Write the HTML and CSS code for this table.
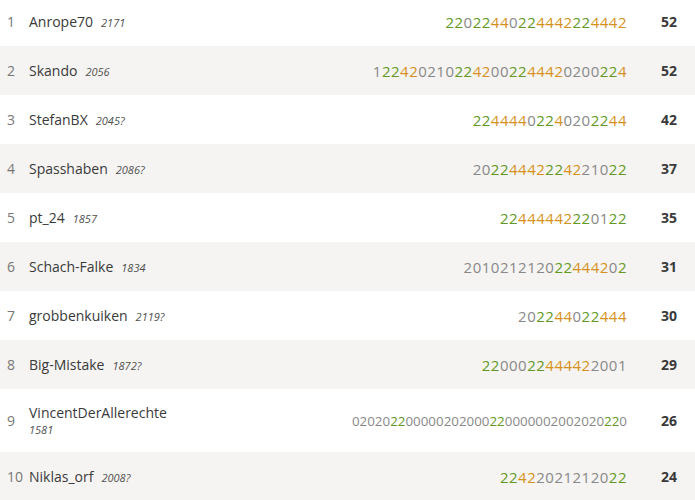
FILE: index.html
```html
<!DOCTYPE html>
<html lang="en">
<head>
<meta charset="utf-8">
<title>Standing</title>
<link rel="stylesheet" href="styles.css">
</head>
<body>
<div class="standing">
  <div class="row">
    <span class="rank">1</span>
    <span class="player"><span class="name">Anrope70</span><span class="rating">2171</span></span>
    <span class="sheet"><s class="g">2</s><s class="g">2</s><s>0</s><s class="g">2</s><s class="g">2</s><s class="o">4</s><s class="o">4</s><s>0</s><s class="g">2</s><s class="g">2</s><s class="o">4</s><s class="o">4</s><s class="o">4</s><s class="o">2</s><s class="g">2</s><s class="g">2</s><s class="o">4</s><s class="o">4</s><s class="o">4</s><s class="o">2</s></span>
    <span class="total">52</span>
  </div>
  <div class="row">
    <span class="rank">2</span>
    <span class="player"><span class="name">Skando</span><span class="rating">2056</span></span>
    <span class="sheet"><s>1</s><s class="g">2</s><s class="g">2</s><s class="o">4</s><s class="o">2</s><s>0</s><s>2</s><s>1</s><s>0</s><s class="g">2</s><s class="g">2</s><s class="o">4</s><s class="o">2</s><s>0</s><s>0</s><s class="g">2</s><s class="g">2</s><s class="o">4</s><s class="o">4</s><s class="o">4</s><s class="o">2</s><s>0</s><s>2</s><s>0</s><s>0</s><s class="g">2</s><s class="g">2</s><s class="o">4</s></span>
    <span class="total">52</span>
  </div>
  <div class="row">
    <span class="rank">3</span>
    <span class="player"><span class="name">StefanBX</span><span class="rating">2045?</span></span>
    <span class="sheet"><s class="g">2</s><s class="g">2</s><s class="o">4</s><s class="o">4</s><s class="o">4</s><s class="o">4</s><s>0</s><s class="g">2</s><s class="g">2</s><s class="o">4</s><s>0</s><s>2</s><s>0</s><s class="g">2</s><s class="g">2</s><s class="o">4</s><s class="o">4</s></span>
    <span class="total">42</span>
  </div>
  <div class="row">
    <span class="rank">4</span>
    <span class="player"><span class="name">Spasshaben</span><span class="rating">2086?</span></span>
    <span class="sheet"><s>2</s><s>0</s><s class="g">2</s><s class="g">2</s><s class="o">4</s><s class="o">4</s><s class="o">4</s><s class="o">2</s><s class="g">2</s><s class="g">2</s><s class="o">4</s><s class="o">2</s><s>2</s><s>1</s><s>0</s><s class="g">2</s><s class="g">2</s></span>
    <span class="total">37</span>
  </div>
  <div class="row">
    <span class="rank">5</span>
    <span class="player"><span class="name">pt_24</span><span class="rating">1857</span></span>
    <span class="sheet"><s class="g">2</s><s class="g">2</s><s class="o">4</s><s class="o">4</s><s class="o">4</s><s class="o">4</s><s class="o">4</s><s class="o">2</s><s class="g">2</s><s class="g">2</s><s>0</s><s>1</s><s class="g">2</s><s class="g">2</s></span>
    <span class="total">35</span>
  </div>
  <div class="row">
    <span class="rank">6</span>
    <span class="player"><span class="name">Schach-Falke</span><span class="rating">1834</span></span>
    <span class="sheet"><s>2</s><s>0</s><s>1</s><s>0</s><s>2</s><s>1</s><s>2</s><s>1</s><s>2</s><s>0</s><s class="g">2</s><s class="g">2</s><s class="o">4</s><s class="o">4</s><s class="o">4</s><s class="o">2</s><s>0</s><s class="g">2</s></span>
    <span class="total">31</span>
  </div>
  <div class="row">
    <span class="rank">7</span>
    <span class="player"><span class="name">grobbenkuiken</span><span class="rating">2119?</span></span>
    <span class="sheet"><s>2</s><s>0</s><s class="g">2</s><s class="g">2</s><s class="o">4</s><s class="o">4</s><s>0</s><s class="g">2</s><s class="g">2</s><s class="o">4</s><s class="o">4</s><s class="o">4</s></span>
    <span class="total">30</span>
  </div>
  <div class="row">
    <span class="rank">8</span>
    <span class="player"><span class="name">Big-Mistake</span><span class="rating">1872?</span></span>
    <span class="sheet"><s class="g">2</s><s class="g">2</s><s>0</s><s>0</s><s>0</s><s class="g">2</s><s class="g">2</s><s class="o">4</s><s class="o">4</s><s class="o">4</s><s class="o">4</s><s class="o">2</s><s>2</s><s>0</s><s>0</s><s>1</s></span>
    <span class="total">29</span>
  </div>
  <div class="row row-tall">
    <span class="rank">9</span>
    <span class="player player-stacked"><span class="name">VincentDerAllerechte</span><span class="rating">1581</span></span>
    <span class="sheet sheet-long"><s>0</s><s>2</s><s>0</s><s>2</s><s>0</s><s class="g">2</s><s class="g">2</s><s>0</s><s>0</s><s>0</s><s>0</s><s>0</s><s>2</s><s>0</s><s>2</s><s>0</s><s>0</s><s>0</s><s class="g">2</s><s class="g">2</s><s>0</s><s>0</s><s>0</s><s>0</s><s>0</s><s>0</s><s>2</s><s>0</s><s>0</s><s>2</s><s>0</s><s>2</s><s>0</s><s class="g">2</s><s class="g">2</s><s>0</s></span>
    <span class="total">26</span>
  </div>
  <div class="row">
    <span class="rank">10</span>
    <span class="player"><span class="name">Niklas_orf</span><span class="rating">2008?</span></span>
    <span class="sheet"><s class="g">2</s><s class="g">2</s><s class="o">4</s><s class="o">2</s><s>2</s><s>0</s><s>2</s><s>1</s><s>2</s><s>1</s><s>2</s><s>0</s><s class="g">2</s><s class="g">2</s></span>
    <span class="total">24</span>
  </div>
</div>
</body>
</html>
```

FILE: styles.css
```css
* { box-sizing: border-box; }

html, body {
  margin: 0;
  padding: 0;
  background: #fff;
}

body {
  font-family: "Open Sans", "Noto Sans", sans-serif;
  color: #3a3a3a;
  overflow: hidden;
}

.standing {
  margin-top: -3px;
}

.row {
  display: flex;
  align-items: center;
  height: 49px;
}

.row:nth-child(even) {
  background: #f5f4f2;
}

.row-tall {
  height: 63px;
}

.rank {
  flex: 0 0 29px;
  padding-left: 7px;
  font-size: 14px;
  color: #777;
}

.player {
  flex: 1 1 auto;
  min-width: 0;
  display: flex;
  align-items: baseline;
  white-space: nowrap;
}

.player-stacked {
  flex-direction: column;
  align-items: flex-start;
}

.name {
  font-size: 14px;
  line-height: 18px;
  color: #3a3a3a;
}

.rating {
  margin-left: 8px;
  font-size: 11px;
  font-style: italic;
  color: #505050;
}

.player-stacked .rating {
  margin-left: 0;
  line-height: 16px;
}

.sheet {
  flex: 0 0 auto;
  font-size: 15px;
  letter-spacing: 0.5px;
  white-space: nowrap;
  color: #888;
}

.sheet-long {
  font-size: 13.35px;
  letter-spacing: 0;
}

.sheet s {
  text-decoration: none;
}

.sheet .g { color: #629924; }
.sheet .o { color: #d59120; }

.total {
  flex: 0 0 68px;
  padding-right: 18px;
  text-align: right;
  font-size: 14px;
  font-weight: 700;
  color: #3a3a3a;
}
```
